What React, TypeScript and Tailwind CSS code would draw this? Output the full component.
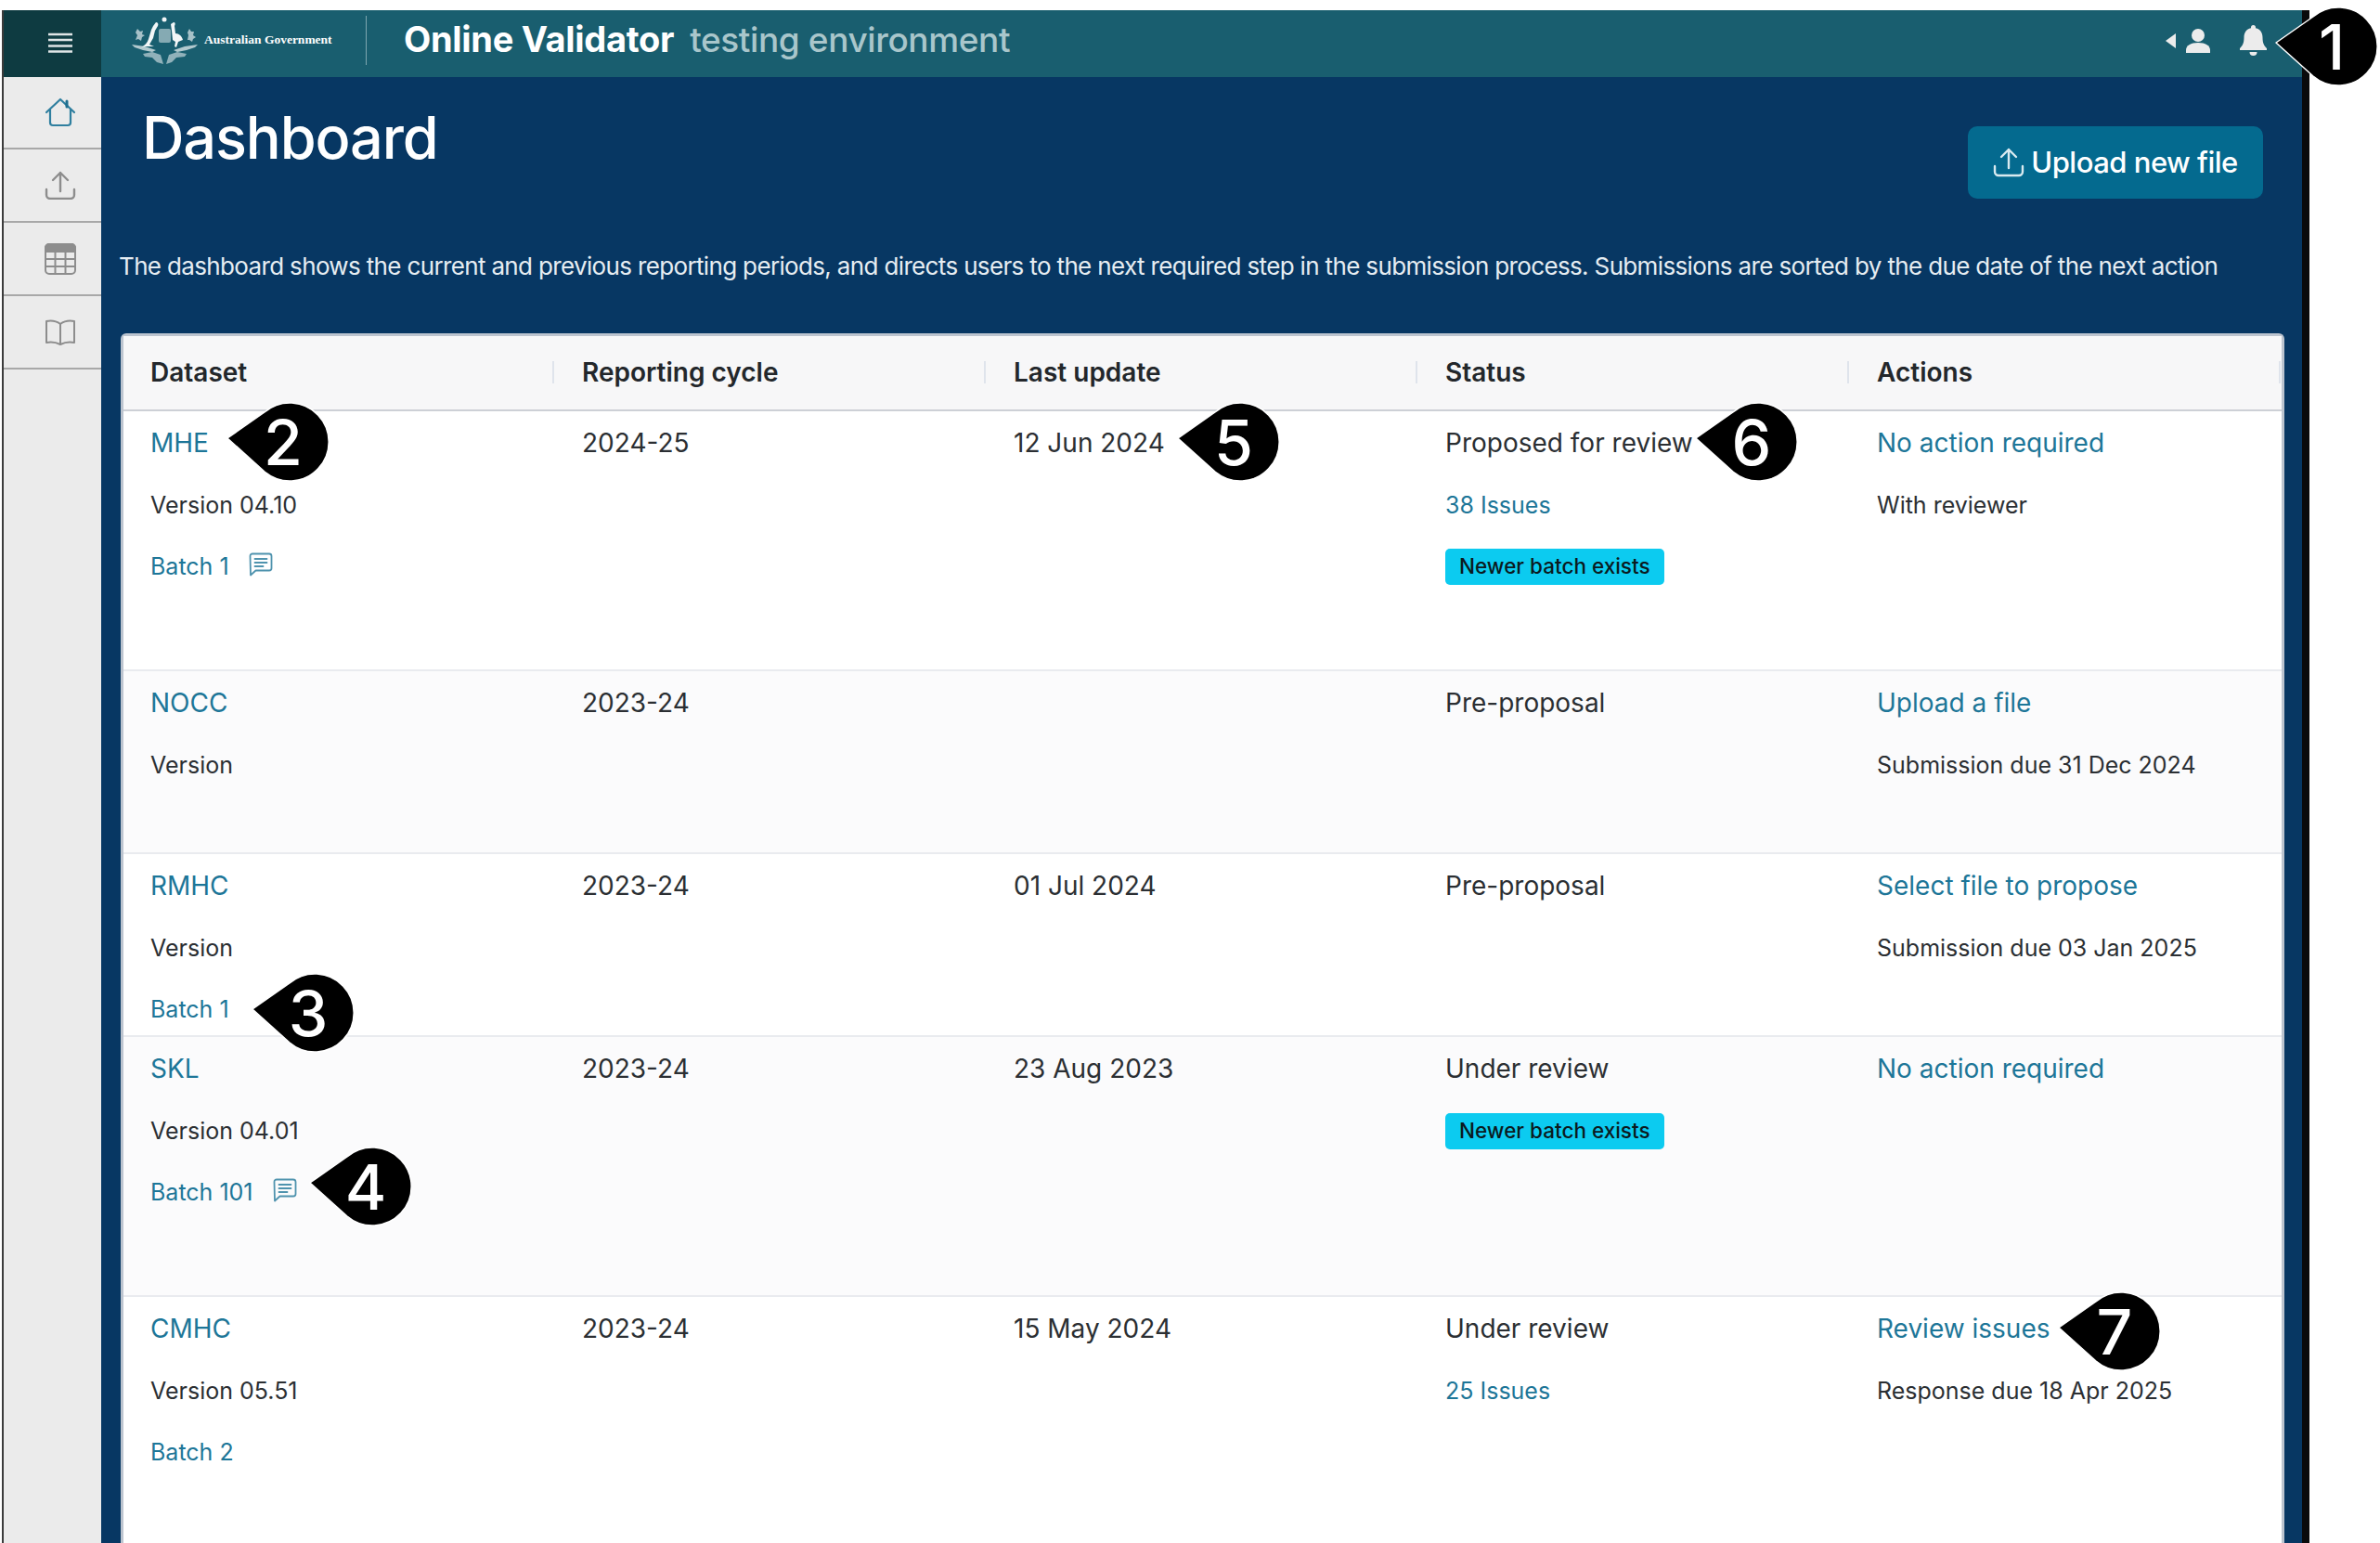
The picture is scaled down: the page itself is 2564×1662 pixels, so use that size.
import { ReactNode } from 'react'

const HomeIcon = () => (
  <svg width="34" height="32" viewBox="0 0 34 32" fill="none" stroke="#2f7f9f" strokeWidth="2.2" strokeLinejoin="round" strokeLinecap="round">
    <path d="M2 16 17 2l15 14" />
    <path d="M6 13v14a3 3 0 0 0 3 3h16a3 3 0 0 0 3-3V13" />
    <path d="M24 4v6" stroke="#1f6f8f" strokeWidth="3" />
  </svg>
)

const UploadIcon = ({ color, size = 34 }: { color: string; size?: number }) => (
  <svg width={size} height={size * 0.94} viewBox="0 0 34 32" fill="none" stroke={color} strokeWidth="2.4" strokeLinecap="round" strokeLinejoin="round">
    <path d="M17 22V2M9 10l8-8 8 8" />
    <path d="M2 20v6a4 4 0 0 0 4 4h22a4 4 0 0 0 4-4v-6" />
  </svg>
)

const TableIcon = () => (
  <svg width="34" height="34" viewBox="0 0 34 34" fill="none" stroke="#8d8d8d" strokeWidth="2">
    <path d="M1 9V5a4 4 0 0 1 4-4h24a4 4 0 0 1 4 4v4z" fill="#8d8d8d" />
    <rect x="1" y="1" width="32" height="32" rx="4" />
    <path d="M1 17h32M1 25h32M11.500 9v24M22.500 9v24" />
  </svg>
)

const BookIcon = () => (
  <svg width="34" height="28" viewBox="0 0 34 28" fill="none" stroke="#8d8d8d" strokeWidth="2" strokeLinejoin="round">
    <path d="M17 5C13 2 7 1 2 2v23c5-1 11 0 15 2 4-2 10-3 15-2V2c-5-1-11 0-15 3z" />
    <path d="M17 5v22" />
  </svg>
)

const CommentIcon = () => (
  <svg width="26" height="26" viewBox="0 0 26 26" fill="none" stroke="#4f93ae" strokeWidth="1.800" strokeLinejoin="round" strokeLinecap="round">
    <path d="M1.500 4a2.500 2.500 0 0 1 2.500-2.500h18A2.500 2.500 0 0 1 24.500 4v13a2.500 2.500 0 0 1-2.500 2.500H7.500L2 24.500z" />
    <path d="M6.500 7h13M6.500 11h13M6.500 15h9" />
  </svg>
)

// rough coat of arms: roo, emu, shield, wattle
const Crest = () => (
  <svg width="73" height="52" viewBox="0 0 73 52" fill="#f2f6f7">
    <circle cx="36" cy="3" r="2.500" />
    <path d="M27 6c2 0 3 2 2 4l-3 5-2 8-4 7 5 2h-9l-5 1c4-2 7-5 8-9l3-10 2-4z" />
    <path d="M46 6c2 0 2 2 1 4l1 8c4 0 7 3 8 7l-5 2-2 6-2-1 1-5-3-2-1-10-1-7z" />
    <rect x="30" y="13" width="13" height="15" rx="2" fillOpacity="0.5" />
    <path d="M7 13l3 3 3-1-1 4 3 1-3 2-1 4-3-2-3 1 2-5-2-3zM63 13l2 3 3 0-1 4 3 2-3 2-1 3-3-2-2 0 1-5-1-3z" fillOpacity="0.65" />
    <path d="M1 30l14 2 12 4-4 2-10-2-9-3zM72 30l-14 2-12 4 4 2 10-2 9-3z" fillOpacity="0.7" />
    <path d="M13 40l10-2 9 3 3 10-7-2-5-5-8-1zM60 40l-10-2-9 3-3 10 6-2 5-5 9-1z" fillOpacity="0.55" />
  </svg>
)

const Callout = ({ n, className }: { n: number; className: string }) => (
  <div className={`absolute w-[110px] h-[86px] flex items-center justify-center pl-[12px] ${className}`}>
    <svg className="absolute inset-0" width="110" height="86" viewBox="0 0 110 86">
      <path d="M1 39 41 11A42 42 0 1 1 41 75Z" fill="#000" stroke="#fff" strokeWidth="1.500" strokeLinejoin="round" />
    </svg>
    <span className="relative text-white text-[68px] leading-none font-medium [font-family:Inter,sans-serif]">{n}</span>
  </div>
)

const Link = ({ children, small }: { children: ReactNode; small?: boolean }) => (
  <span className={small ? 'text-[#1d7698] text-[25px]' : 'text-[#1d7698] text-[28px]'}>{children}</span>
)

const Badge = () => (
  <span className="inline-flex items-center h-[39px] px-[15px] rounded-[5px] bg-[#0ccbf0] text-[#0b1a20] text-[22.5px] font-medium">Newer batch exists</span>
)

type Row = {
  height: string
  bg: string
  name: string
  version: string
  batch?: string
  comment?: boolean
  cycle: string
  updated?: string
  status: string
  issues?: string
  badge?: boolean
  action: string
  note?: string
}

const rows: Row[] = [
  { height: 'h-[280px]', bg: 'bg-white', name: 'MHE', version: 'Version 04.10', batch: 'Batch 1', comment: true, cycle: '2024-25', updated: '12 Jun 2024', status: 'Proposed for review', issues: '38 Issues', badge: true, action: 'No action required', note: 'With reviewer' },
  { height: 'h-[197px]', bg: 'bg-[#fbfbfc]', name: 'NOCC', version: 'Version', cycle: '2023-24', status: 'Pre-proposal', action: 'Upload a file', note: 'Submission due 31 Dec 2024' },
  { height: 'h-[197px]', bg: 'bg-white', name: 'RMHC', version: 'Version', batch: 'Batch 1', cycle: '2023-24', updated: '01 Jul 2024', status: 'Pre-proposal', action: 'Select file to propose', note: 'Submission due 03 Jan 2025' },
  { height: 'h-[280px]', bg: 'bg-[#fbfbfc]', name: 'SKL', version: 'Version 04.01', batch: 'Batch 101', comment: true, cycle: '2023-24', updated: '23 Aug 2023', status: 'Under review', badge: true, action: 'No action required' },
  { height: 'h-[300px]', bg: 'bg-white', name: 'CMHC', version: 'Version 05.51', batch: 'Batch 2', cycle: '2023-24', updated: '15 May 2024', status: 'Under review', issues: '25 Issues', action: 'Review issues', note: 'Response due 18 Apr 2025' },
]

const cell = 'pl-[29px] pt-[16px] flex flex-col items-start'
const line1 = 'h-[36px] leading-[36px] text-[28px] whitespace-nowrap'
const line2 = 'mt-[31px] h-[36px] leading-[36px] text-[25px] whitespace-nowrap flex items-center'
const line3 = 'mt-[30px] h-[36px] leading-[36px] text-[25px] whitespace-nowrap flex items-center'

export default function App() {
  return (
    <div className="relative w-[2564px] h-[1662px] bg-white overflow-hidden pt-[11px] [font-family:Inter,sans-serif] text-[#2b2f33]">
      <div className="ml-[2px] w-[2486px] h-[1651px] flex border-l-2 border-l-[#3c3c3c] border-r-[8px] border-r-[#0a0a0c]">
        <aside className="w-[105px] shrink-0 bg-[#ebebeb] flex flex-col">
          <div className="h-[72px] bg-[#0e3b41] flex items-center justify-center pl-[17px] pb-[3px]">
            <svg width="26" height="22" viewBox="0 0 26 22" stroke="#dfe5e6" strokeWidth="2.400">
              <path d="M0 2h26M0 8h26M0 14.500h26M0 20.500h26" />
            </svg>
          </div>
          <div className="h-[78px] flex items-center justify-center pl-[17px] border-b-2 border-[#a8a8a8]"><HomeIcon /></div>
          <div className="h-[79px] flex items-center justify-center pl-[17px] border-b-2 border-[#a8a8a8]"><UploadIcon color="#8d8d8d" /></div>
          <div className="h-[79px] flex items-center justify-center pl-[17px] border-b-2 border-[#a8a8a8]"><TableIcon /></div>
          <div className="h-[79px] flex items-center justify-center pl-[17px] border-b-2 border-[#a8a8a8]"><BookIcon /></div>
        </aside>

        <div className="flex-1 flex flex-col min-w-0 bg-[#073763]">
          <header className="h-[72px] shrink-0 bg-[#195e6f] flex items-center justify-between pl-[32px] pr-[38px] pb-[7px]">
            <div className="flex items-center">
              <Crest />
              <span className="ml-[6px] w-[138px] text-white text-[13.5px] font-bold whitespace-nowrap [font-family:'Liberation_Serif',serif]">Australian Government</span>
              <div className="ml-[36px] w-px h-[53px] bg-[#7ea6b0]" />
              <span className="ml-[40px] mb-[2px] text-white text-[38px] font-bold tracking-[-0.3px]">Online Validator</span>
              <span className="ml-[17px] mb-[2px] text-[#a9c6cb] text-[37px] font-medium tracking-[-0.4px]">testing environment</span>
            </div>
            <div className="flex items-center">
              <svg width="11" height="16" viewBox="0 0 11 16" fill="#ececec"><path d="M11 0v16L0 8z" /></svg>
              <svg className="ml-[11px]" width="26" height="26" viewBox="0 0 26 26" fill="#ececec">
                <circle cx="13" cy="7" r="7" />
                <path d="M0 26v-3c0-5 5-8 13-8s13 3 13 8v3z" />
              </svg>
              <svg className="ml-[32px]" width="29" height="33" viewBox="0 0 29 33" fill="#ececec">
                <path d="M14.500 0a2.500 2.500 0 0 1 2.500 2.500v.8c5 1 7.500 5 7.500 10 0 6 1.500 9 4.500 11.700v2H0v-2c3-2.700 4.500-5.700 4.500-11.700 0-5 2.500-9 7.500-10v-.8A2.500 2.500 0 0 1 14.500 0z" />
                <path d="M10.500 29h8a4 4 0 0 1-8 0z" />
              </svg>
            </div>
          </header>

          <main className="flex-1 min-h-0 overflow-hidden">
            <div className="flex justify-between items-start pl-[44px] pr-[42px] pt-[19px] h-[131px]">
              <h1 className="text-white text-[63px] leading-[92px] font-medium tracking-[-1.1px]">Dashboard</h1>
              <button className="mt-[34px] w-[318px] h-[78px] rounded-[10px] bg-[#046a8f] flex items-center justify-center text-white text-[31px] font-medium tracking-[-0.5px]">
                <span className="mr-[7px]"><UploadIcon color="#d9eaf0" size={34} /></span>
                Upload new file
              </button>
            </div>
            <p className="pl-[19px] mt-[53px] h-[40px] leading-[40px] text-[#e6edf2] text-[26px] whitespace-nowrap tracking-[-0.65px]">
              The dashboard shows the current and previous reporting periods, and directs users to the next required step in the submission process. Submissions are sorted by the due date of the next action
            </p>
            <div className="ml-[21px] mt-[52px] w-[2331px] border-x-[3px] border-t-[3px] border-[#bcc4cf] rounded-t-[6px] bg-white">
              <div className="grid grid-cols-5 h-[81px] bg-[#f7f7f8] border-b-2 border-[#cdd0d6]">
                {['Dataset', 'Reporting cycle', 'Last update', 'Status', 'Actions'].map((h) => (
                  <div key={h} className="flex items-center justify-between pl-[29px] h-[77px]">
                    <span className="text-[28px] font-semibold text-[#23272b]">{h}</span>
                    <span className="w-[2px] h-[24px] mr-[1px] bg-[#dfe4ec]" />
                  </div>
                ))}
              </div>
              {rows.map((r) => (
                <div key={r.name} className={`grid grid-cols-5 border-b-2 border-[#e9ebef] ${r.height} ${r.bg}`}>
                  <div className={cell}>
                    <div className={line1}><Link>{r.name}</Link></div>
                    <div className={line2}>{r.version}</div>
                    {r.batch && (
                      <div className={line3}>
                        <Link small>{r.batch}</Link>
                        {r.comment && <span className="ml-[21px] mb-[4px]"><CommentIcon /></span>}
                      </div>
                    )}
                  </div>
                  <div className={cell}><div className={line1}>{r.cycle}</div></div>
                  <div className={cell}>{r.updated && <div className={line1}>{r.updated}</div>}</div>
                  <div className={cell}>
                    <div className={line1}>{r.status}</div>
                    {r.issues && <div className={line2}><Link small>{r.issues}</Link></div>}
                    {r.badge && <div className={r.issues ? line3 : line2}><Badge /></div>}
                  </div>
                  <div className={cell}>
                    <div className={line1}><Link>{r.action}</Link></div>
                    {r.note && <div className={line2}>{r.note}</div>}
                  </div>
                </div>
              ))}
            </div>
          </main>
        </div>
      </div>

      <Callout n={1} className="left-[2451px] top-[7px]" />
      <Callout n={2} className="left-[244px] top-[433px]" />
      <Callout n={3} className="left-[271px] top-[1048px]" />
      <Callout n={4} className="left-[333px] top-[1235px]" />
      <Callout n={5} className="left-[1268px] top-[433px]" />
      <Callout n={6} className="left-[1826px] top-[433px]" />
      <Callout n={7} className="left-[2217px] top-[1391px]" />
    </div>
  )
}
